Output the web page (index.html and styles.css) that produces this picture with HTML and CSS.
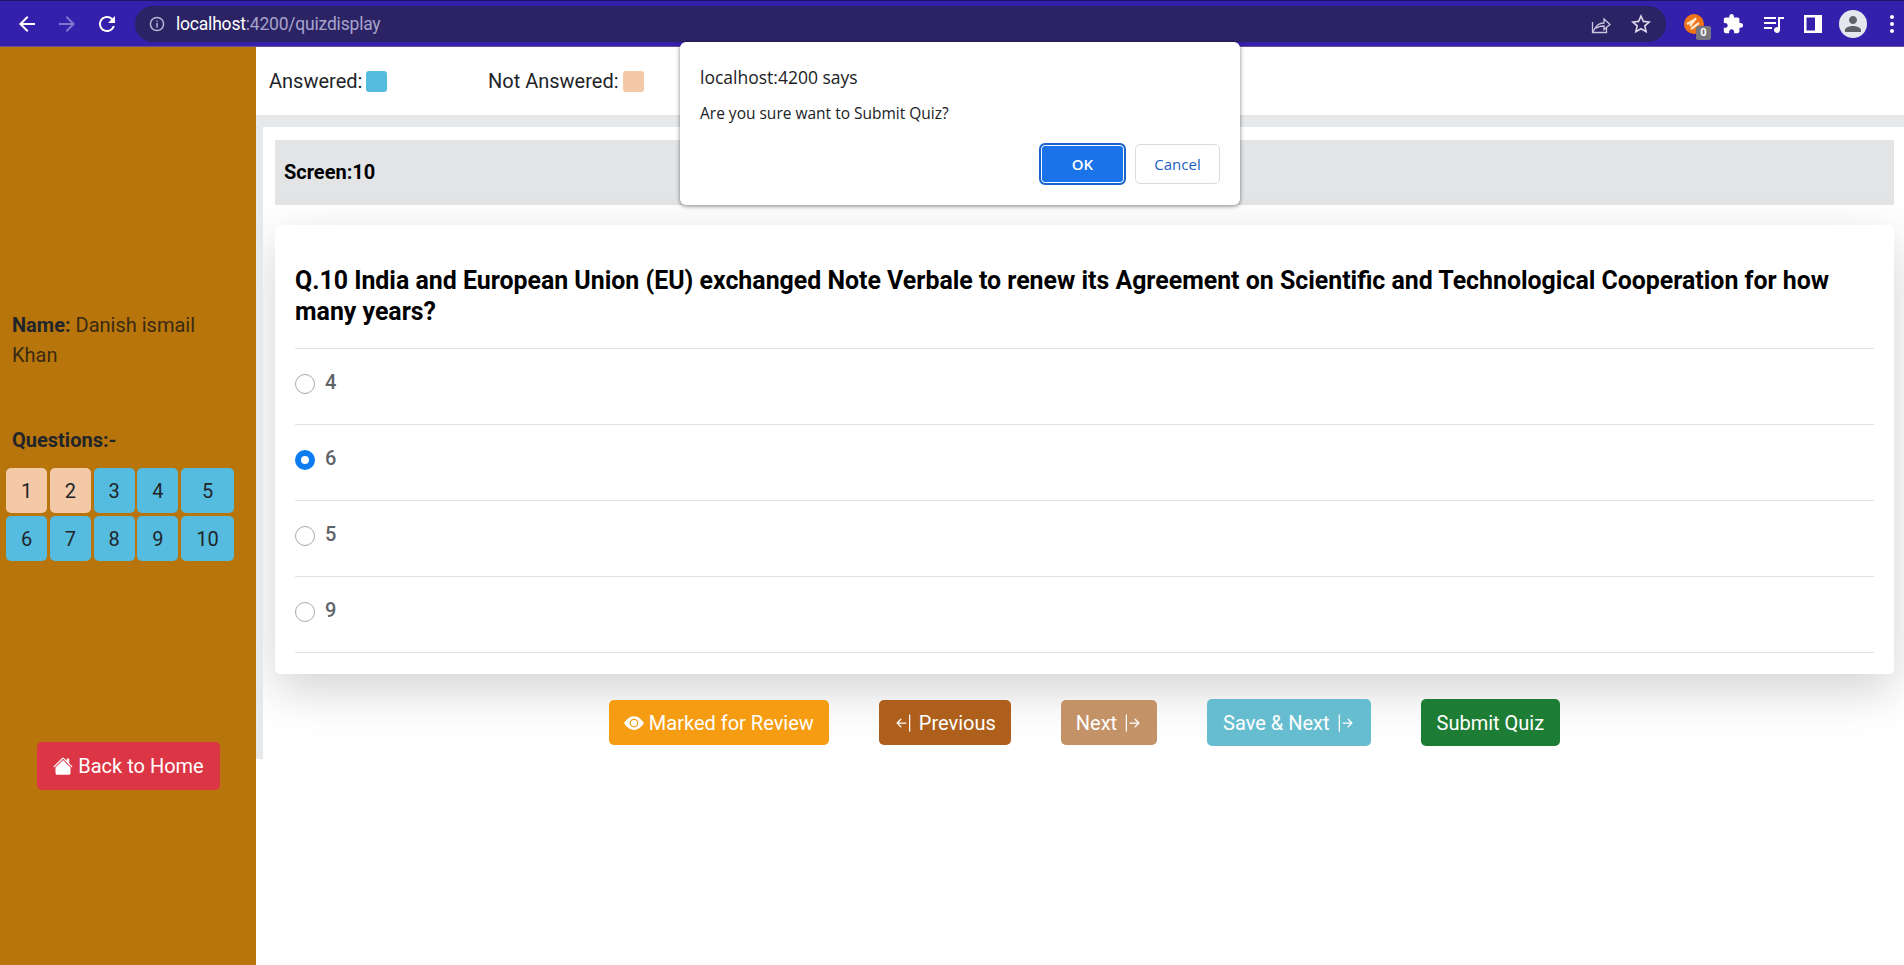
FILE: index.html
```html
<!DOCTYPE html>
<html lang="en">
<head>
  <meta charset="UTF-8" />
  <title>Quiz</title>
  <link rel="stylesheet" href="styles.css">
</head>
<body>
  <div class="toolbar">
    <svg class="nav-icon" viewBox="0 0 24 24"><path d="M20 11H7.83l5.59-5.59L12 4l-8 8 8 8 1.41-1.41L7.83 13H20v-2z"/></svg>
    <svg class="nav-icon dim" viewBox="0 0 24 24"><path d="M12 4l-1.41 1.41L16.17 11H4v2h12.17l-5.58 5.59L12 20l8-8z"/></svg>
    <svg class="nav-icon" viewBox="0 0 24 24"><path d="M17.65 6.35A7.958 7.958 0 0 0 12 4c-4.42 0-7.99 3.58-7.99 8s3.57 8 7.99 8c3.73 0 6.84-2.55 7.73-6h-2.08A5.99 5.99 0 0 1 12 18c-3.31 0-6-2.69-6-6s2.69-6 6-6c1.66 0 3.14.69 4.22 1.78L13 11h7V4l-2.35 2.35z"/></svg>
    <div class="omnibox">
      <svg class="info-icon" viewBox="0 0 16 16"><circle cx="8" cy="8" r="6.6"/><path d="M8 7v4.4M8 4.4v1.4"/></svg>
      <span class="url"><b>localhost</b>:4200/quizdisplay</span>
      <svg class="share-icon" viewBox="0 0 20 20"><path d="M1.500 8v10.500h14V14M1.500 18.500l3-5c2-3 5-4.500 8.500-4.500V5l6 5.500-6 5v-3.500c-3 0-6 .5-8 2.500"/></svg>
      <svg class="star-icon" viewBox="0 0 20 20"><path d="M10 2l2.4 5.4 5.8.6-4.4 3.9 1.3 5.7L10 14.700l-5.100 2.900 1.300-5.700L1.800 8l5.800-.6z"/></svg>
    </div>
    <div class="ext">
      <svg viewBox="0 0 20 20"><circle cx="10" cy="10" r="10" fill="#ee7417"/><path d="M6 12l6-8M3 10l7-4M7 15l8-6" stroke="#ffe6cc" stroke-width="2.200" fill="none"/></svg>
      <span class="ext-count">0</span>
    </div>
    <svg class="tool-icon puzzle" viewBox="0 0 24 24"><path d="M20.500 11H19V7c0-1.100-.9-2-2-2h-4V3.500C13 2.120 11.880 1 10.500 1S8 2.120 8 3.500V5H4c-1.100 0-1.990.9-1.990 2v3.800H3.500c1.490 0 2.700 1.210 2.700 2.700s-1.210 2.700-2.700 2.700H2V20c0 1.100.9 2 2 2h3.800v-1.500c0-1.490 1.210-2.700 2.700-2.700 1.490 0 2.700 1.210 2.700 2.700V22H17c1.100 0 2-.9 2-2v-4h1.500c1.380 0 2.500-1.120 2.500-2.500S21.880 11 20.500 11z"/></svg>
    <svg class="tool-icon queue" viewBox="0 0 20 20"><path d="M0 3h12v2H0zM0 8h12v2H0zM0 13h8v2H0zM14 3h6v2h-4v11a3 3 0 1 1-2-2.800z"/></svg>
    <svg class="tool-icon panel-icon" viewBox="0 0 18 18"><path fill-rule="evenodd" d="M0 0h18v18H0zM2.500 2.500v13H11v-13z"/></svg>
    <div class="avatar">
      <svg viewBox="0 0 24 24"><path d="M12 12c2.210 0 4-1.790 4-4s-1.790-4-4-4-4 1.790-4 4 1.790 4 4 4zm0 2c-2.670 0-8 1.340-8 4v2h16v-2c0-2.660-5.330-4-8-4z"/></svg>
    </div>
    <div class="dots"><i></i><i></i><i></i></div>
  </div>

  <div class="page">
    <aside class="sidebar">
      <p class="user"><strong>Name:</strong> Danish ismail<br>Khan</p>
      <h4 class="q-title">Questions:-</h4>
      <div class="q-grid">
        <button class="q-btn todo">1</button>
        <button class="q-btn todo">2</button>
        <button class="q-btn">3</button>
        <button class="q-btn">4</button>
        <button class="q-btn">5</button>
        <button class="q-btn">6</button>
        <button class="q-btn">7</button>
        <button class="q-btn">8</button>
        <button class="q-btn">9</button>
        <button class="q-btn">10</button>
      </div>
      <button class="home-btn">
        <svg class="bi" viewBox="0 0 16 16"><path d="M8.707 1.500a1 1 0 0 0-1.414 0L.646 8.146a.5.5 0 0 0 .708.708L8 2.207l6.646 6.647a.5.5 0 0 0 .708-.708L13 5.793V2.500a.5.5 0 0 0-.5-.5h-1a.5.500 0 0 0-.5.500v1.293L8.707 1.500Z"/><path d="m8 3.293 6 6V13.500a1.500 1.500 0 0 1-1.500 1.500h-9A1.500 1.500 0 0 1 2 13.500V9.293l6-6Z"/></svg>
        Back to Home
      </button>
    </aside>

    <main class="main">
      <div class="legend">
        <div class="legend-item">Answered: <span class="swatch answered"></span></div>
        <div class="legend-item">Not Answered: <span class="swatch missed"></span></div>
      </div>

      <div class="band">
        <div class="panel">
          <div class="screen-head">Screen:10</div>
          <div class="card">
            <h3 class="question">Q.10 India and European Union (EU) exchanged Note Verbale to renew its Agreement on Scientific and Technological Cooperation for how many years?</h3>
            <div class="option"><span class="radio"></span><span>4</span></div>
            <div class="option"><span class="radio on"></span><span>6</span></div>
            <div class="option"><span class="radio"></span><span>5</span></div>
            <div class="option"><span class="radio"></span><span>9</span></div>
          </div>
          <div class="actions">
            <button class="act review">
              <svg class="bi" viewBox="0 0 16 16"><path d="M10.500 8a2.500 2.500 0 1 1-5 0 2.500 2.500 0 0 1 5 0z"/><path d="M0 8s3-5.500 8-5.500S16 8 16 8s-3 5.500-8 5.500S0 8 0 8zm8 3.500a3.500 3.500 0 1 0 0-7 3.500 3.500 0 0 0 0 7z"/></svg>
              Marked for Review
            </button>
            <button class="act prev">
              <svg class="bi" viewBox="0 0 16 16"><path d="M12.500 15a.5.5 0 0 1-.5-.5v-13a.5.5 0 0 1 1 0v13a.5.5 0 0 1-.5.500ZM10 8a.5.5 0 0 1-.5.500H3.707l2.147 2.146a.5.5 0 0 1-.708.708l-3-3a.5.500 0 0 1 0-.708l3-3a.5.500 0 1 1 .708.708L3.707 7.500H9.500a.5.500 0 0 1 .5.500Z"/></svg>
              Previous
            </button>
            <button class="act next">
              Next
              <svg class="bi" viewBox="0 0 16 16"><path d="M6 8a.5.500 0 0 0 .5.500h5.793l-2.147 2.146a.5.500 0 0 0 .708.708l3-3a.5.500 0 0 0 0-.708l-3-3a.5.500 0 0 0-.708.708L12.293 7.500H6.500A.5.500 0 0 0 6 8Zm-2.500 7a.5.500 0 0 1-.5-.5v-13a.5.500 0 0 1 1 0v13a.5.500 0 0 1-.5.500Z"/></svg>
            </button>
            <button class="act save">
              Save &amp; Next
              <svg class="bi" viewBox="0 0 16 16"><path d="M6 8a.5.500 0 0 0 .5.500h5.793l-2.147 2.146a.5.500 0 0 0 .708.708l3-3a.5.500 0 0 0 0-.708l-3-3a.5.500 0 0 0-.708.708L12.293 7.500H6.500A.5.500 0 0 0 6 8Zm-2.500 7a.5.500 0 0 1-.5-.5v-13a.5.500 0 0 1 1 0v13a.5.500 0 0 1-.5.500Z"/></svg>
            </button>
            <button class="act submit">Submit Quiz</button>
          </div>
        </div>
      </div>
    </main>
  </div>

  <div class="dialog">
    <div class="dialog-title">localhost:4200 says</div>
    <div class="dialog-msg">Are you sure want to Submit Quiz?</div>
    <div class="dialog-btns">
      <button class="dlg-ok">OK</button>
      <button class="dlg-cancel">Cancel</button>
    </div>
  </div>
</body>
</html>
```

FILE: styles.css
```css
* {
  box-sizing: border-box;
}
html, body {
  margin: 0;
  height: 100%;
  overflow: hidden;
}
body {
  font-family: Roboto, sans-serif;
  color: #212529;
  background: #fff;
}
button {
  font-family: inherit;
  cursor: pointer;
}

/* browser bar */
.toolbar {
  height: 47px;
  background: #3420ab;
  border-top: 1px solid #1d1568;
  border-bottom: 1px solid #6a4f9c;
  display: flex;
  align-items: center;
  padding-left: 15px;
}
.nav-icon {
  width: 24px;
  height: 24px;
  fill: #fff;
  margin-right: 16px;
}
.nav-icon.dim {
  fill: #8076cf;
}
.omnibox {
  width: 1531px;
  height: 36px;
  background: #2b2364;
  border-radius: 18px;
  display: flex;
  align-items: center;
  padding: 0 15px 0 14px;
}
.info-icon {
  width: 16px;
  height: 16px;
  fill: none;
  stroke: #b8b5d4;
  stroke-width: 1.500;
}
.url {
  margin-left: 11px;
  font-size: 17.500px;
  letter-spacing: -0.2px;
  color: #a7a3cb;
  flex: 1;
}
.url b {
  font-weight: 400;
  color: #fff;
}
.share-icon {
  width: 20px;
  height: 20px;
  fill: none;
  stroke: #c9c6de;
  stroke-width: 1.300;
  margin-right: 20px;
}
.star-icon {
  width: 20px;
  height: 20px;
  fill: none;
  stroke: #dcdaea;
  stroke-width: 1.600;
}
.ext {
  position: relative;
  width: 20px;
  height: 20px;
  margin-left: 18px;
}
.ext svg {
  display: block;
}
.ext-count {
  position: absolute;
  left: 12px;
  top: 12px;
  width: 15px;
  height: 14px;
  background: #77767f;
  border-radius: 2px;
  color: #fff;
  font-size: 11px;
  font-weight: 700;
  line-height: 14px;
  text-align: center;
}
.tool-icon {
  fill: #fff;
}
.puzzle {
  width: 22px;
  height: 22px;
  margin-left: 18px;
}
.queue {
  width: 20px;
  height: 20px;
  margin-left: 20px;
}
.panel-icon {
  width: 18px;
  height: 18px;
  margin-left: 20px;
}
.avatar {
  width: 28px;
  height: 28px;
  border-radius: 50%;
  background: #e6e6ee;
  margin-left: 17px;
  display: flex;
  align-items: center;
  justify-content: center;
}
.avatar svg {
  width: 24px;
  height: 24px;
  fill: #5f6368;
}
.dots {
  display: flex;
  flex-direction: column;
  gap: 3px;
  margin-left: 23px;
}
.dots i {
  width: 4px;
  height: 4px;
  border-radius: 50%;
  background: #fff;
}

/* page */
.page {
  display: flex;
  height: 918px;
}
.sidebar {
  width: 256px;
  flex: none;
  background: #b8750b;
  padding: 263px 0 0 6px;
}
.user {
  margin: 0;
  padding: 0 20px 0 6px;
  font-size: 20px;
  line-height: 30px;
  font-weight: 400;
  color: #3a2a12;
}
.user strong {
  font-weight: 700;
  color: #212529;
}
.q-title {
  margin: 55px 0 13px 6px;
  font-size: 20px;
  line-height: 30px;
  font-weight: 700;
}
.q-grid {
  display: grid;
  grid-template-columns: 41px 41px 41px 41px 53px;
  grid-auto-rows: 45px;
  column-gap: 2.750px;
  row-gap: 3px;
}
.q-btn {
  border: 0;
  padding: 0;
  border-radius: 5px;
  background: #56bcdf;
  color: #212529;
  font-size: 20px;
}
.q-btn.todo {
  background: #f4c9a7;
}
.home-btn {
  display: block;
  margin: 181px 0 0 31px;
  width: 183px;
  height: 48px;
  padding: 0;
  border: 0;
  border-radius: 5px;
  background: #dc3545;
  color: #fff;
  font-size: 20px;
}
.bi {
  width: 20px;
  height: 20px;
  fill: currentColor;
  vertical-align: -3px;
}

.main {
  flex: 1;
  min-width: 0;
}
.legend {
  height: 68px;
  display: flex;
  align-items: center;
  padding-left: 13px;
}
.legend-item {
  width: 219px;
  font-size: 20px;
  font-weight: 400;
  display: flex;
  align-items: center;
  gap: 4px;
}
.swatch {
  width: 21px;
  height: 21px;
  border-radius: 3px;
}
.swatch.answered {
  background: #56bcdf;
}
.swatch.missed {
  background: #f4c9a7;
}
.band {
  height: 644px;
  background: #e6e8ea;
  padding: 12px 0 0 7px;
}
.panel {
  height: 632px;
  background: #fff;
  padding: 13px 10px 0 12px;
  overflow: hidden;
}
.screen-head {
  height: 65px;
  background: #e2e4e6;
  display: flex;
  align-items: center;
  padding: 0 0 2px 9px;
  font-size: 20px;
  font-weight: 700;
  color: #000;
}
.card {
  margin-top: 20px;
  height: 449px;
  background: #fff;
  border-radius: 5px;
  padding: 40px 20px 0;
  box-shadow: 0 16px 48px rgba(0,0,0,0.175);
}
.question {
  margin: 0;
  padding-bottom: 21px;
  border-bottom: 1px solid #dee2e6;
  font-size: 24.900px;
  line-height: 31px;
  font-weight: 700;
  color: #000;
}
.option {
  height: 76px;
  border-bottom: 1px solid #dee2e6;
  display: flex;
  align-items: flex-start;
  padding-top: 20px;
  gap: 10px;
  font-size: 20px;
  font-weight: 500;
  line-height: 26px;
  color: #5f6368;
}
.radio {
  width: 20px;
  height: 20px;
  margin-top: 5px;
  border-radius: 50%;
  border: 1px solid #a9a9a9;
  background: #fff;
}
.radio.on {
  border: 6px solid #0d7cf2;
}
.actions {
  display: flex;
  justify-content: center;
  align-items: center;
  gap: 50px;
  margin-top: 25px;
}
.act {
  height: 45px;
  padding: 0 15px;
  border: 0;
  border-radius: 5px;
  color: #fff;
  font-size: 20px;
  white-space: nowrap;
}
.review {
  background: #f59c12;
}
.prev {
  background: #ad5f1b;
}
.next {
  background: #c49267;
}
.save {
  height: 47px;
  padding: 0 16px;
  background: #67bdd0;
}
.submit {
  height: 47px;
  padding: 0 16px;
  background: #1e7d34;
}

/* confirm box */
.dialog {
  position: absolute;
  left: 680px;
  top: 42px;
  width: 560px;
  height: 163px;
  background: #fff;
  border-radius: 6px;
  box-shadow: 0 1px 4px rgba(0,0,0,0.5);
  padding: 22px 20px 0;
  font-family: "Open Sans", sans-serif;
  color: #202124;
}
.dialog-title {
  font-size: 17.500px;
  line-height: 26px;
}
.dialog-msg {
  margin-top: 13px;
  font-size: 15.500px;
  line-height: 20px;
}
.dialog-btns {
  display: flex;
  justify-content: flex-end;
  align-items: center;
  gap: 9px;
  margin-top: 20px;
}
.dlg-ok {
  width: 87px;
  height: 42px;
  background: #1a73e8;
  color: #fff;
  border: 2px solid #1a63d0;
  border-radius: 6px;
  box-shadow: inset 0 0 0 1px #fff;
  font-size: 15px;
  font-weight: 600;
  font-family: inherit;
}
.dlg-cancel {
  width: 85px;
  height: 40px;
  background: #fff;
  color: #1a5fc4;
  border: 1px solid #dadce0;
  border-radius: 5px;
  font-size: 15px;
  font-weight: 400;
  font-family: inherit;
}
```
